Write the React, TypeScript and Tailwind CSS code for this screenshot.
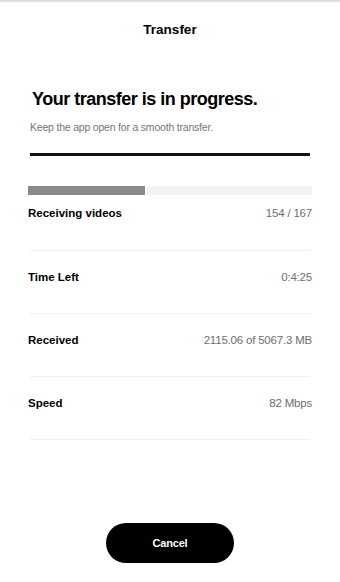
import React from 'react';

const rows = [
  { label: 'Receiving videos', value: '154 / 167' },
  { label: 'Time Left', value: '0:4:25' },
  { label: 'Received', value: '2115.06 of 5067.3 MB' },
  { label: 'Speed', value: '82 Mbps' },
];

export default function App() {
  return (
    <div
      className="w-[340px] h-[582px] bg-white flex flex-col text-black overflow-hidden"
      style={{ fontFamily: '"Liberation Sans", Arial, sans-serif' }}
    >
      {/* top edge shadow */}
      <div className="h-[3px] bg-gradient-to-b from-[#d4d4d4] to-white" />

      {/* Header */}
      <header className="h-[55px] flex items-center justify-center">
        <h1 className="text-[13.5px] font-bold">Transfer</h1>
      </header>

      <main className="flex-1 flex flex-col px-[28px]">
        <h2 className="mt-[31px] pl-[4px] text-[18px] leading-[21px] font-bold tracking-[-0.5px]">
          Your transfer is in progress.
        </h2>
        <p className="mt-[10px] pl-[2px] text-[10.5px] leading-[14px] text-[#767676] tracking-[-0.2px]">
          Keep the app open for a smooth transfer.
        </p>

        <div className="mt-[19px] mx-[2px] h-[3px] bg-[#111]" />

        {/* Progress bar */}
        <div className="mt-[30px] h-[9px] flex gap-[2px]">
          <div className="w-[117px] bg-[#8a8a8a]" />
          <div className="flex-1 bg-[#f3f3f3]" />
        </div>

        {/* Details */}
        <div className="flex flex-col">
          {rows.map((r, i) => (
            <div
              key={r.label}
              className={`flex flex-col ${i === 0 ? 'pt-[12px]' : 'pt-[20px]'}`}
            >
              <div className="flex items-center justify-between text-[11.5px] leading-[12px]">
                <span className="font-bold">{r.label}</span>
                <span className="text-[#6e6e6e] tracking-[-0.2px]">{r.value}</span>
              </div>
              <div className={`mx-[2px] h-px bg-[#efefef] ${i === 0 ? 'mt-[31px]' : 'mt-[30px]'}`} />
            </div>
          ))}
        </div>

        <div className="flex-1" />

        <div className="flex justify-center pb-[19px]">
          <button className="w-[128px] h-[40px] rounded-full bg-black text-white text-[11px] font-bold tracking-[-0.2px]">
            Cancel
          </button>
        </div>
      </main>
    </div>
  );
}
